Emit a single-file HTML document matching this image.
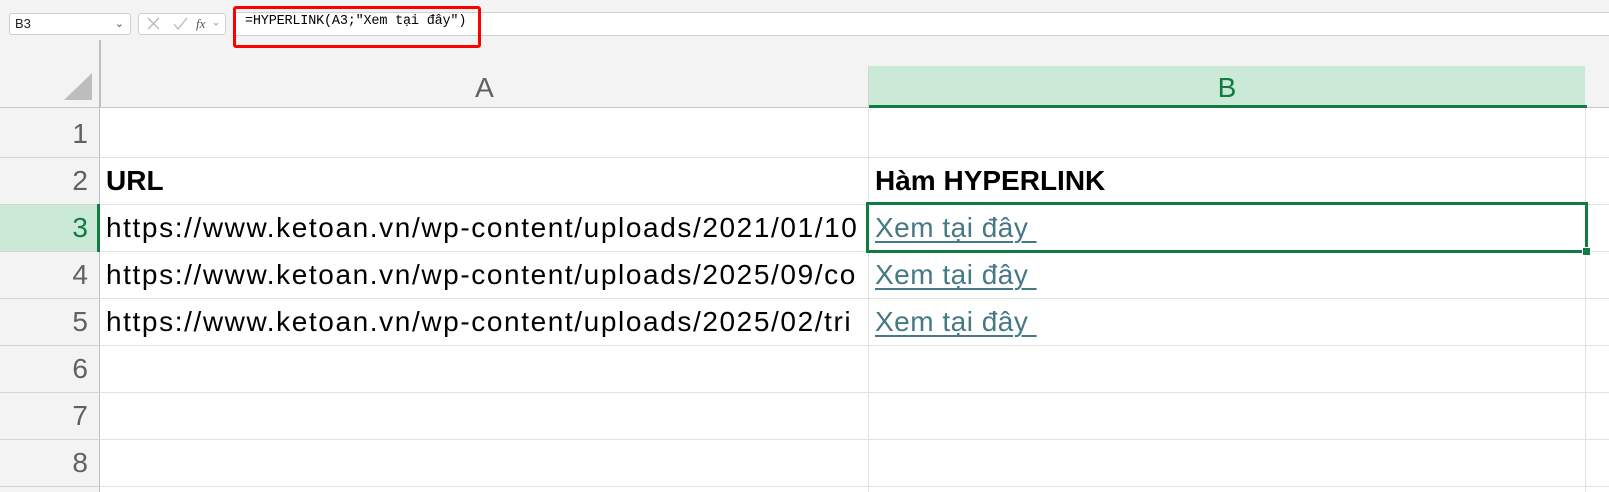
<!DOCTYPE html>
<html><head><meta charset="utf-8"><style>
*{margin:0;padding:0;box-sizing:border-box}
body{width:1609px;height:492px;overflow:hidden;background:#f3f3f3;position:relative;font-family:"Liberation Sans","Noto Sans CJK SC",sans-serif}
.a{position:absolute}
.grid{left:100px;top:108px;width:1509px;height:384px;background:#fff}
.hl{height:1px;background:#e1e1e1;left:100px;width:1509px}
.rh{left:0;width:88px;text-align:right;font-size:28px;color:#616161;height:47px;line-height:47px}
.rl{left:0;width:100px;height:1px;background:#d4d4d4}
.cell{font-size:28px;line-height:47px;height:47px;white-space:nowrap;overflow:hidden}
.url{letter-spacing:1.6px;font-family:"Liberation Sans",sans-serif}
.lnk{color:#467886;text-decoration:underline;text-decoration-thickness:2px;text-underline-offset:4px;letter-spacing:0.5px}
</style></head><body>
<div class="a" style="left:9px;top:13px;width:122px;height:22px;background:#fff;border:1px solid #d0d0d0;border-radius:3px;font-size:13px;line-height:20px;padding-left:5px;color:#222">B3<span class="a" style="right:6px;top:0;color:#555;font-size:11px">&#8964;</span></div>
<div class="a" style="left:138px;top:13px;width:88px;height:22px;background:#fff;border:1px solid #d0d0d0;border-radius:3px"></div>
<svg class="a" style="left:140px;top:13px" width="86" height="22"><path d="M8 5l11 11M19 5L8 16" stroke="#b8b8b8" stroke-width="1.3" fill="none"/><path d="M34 11l4 5 9-11" stroke="#b8b8b8" stroke-width="1.3" fill="none"/><text x="56" y="15" font-size="13" font-style="italic" fill="#555" font-family="Liberation Serif">fx</text><path d="M74 10l2 2 2-2" stroke="#aaa" fill="none"/></svg>
<div class="a" style="left:234px;top:12px;width:1375px;height:24px;background:#fff;border-top:1px solid #d0d0d0;border-bottom:1px solid #d0d0d0"></div>
<div class="a" style="left:233px;top:6px;width:248px;height:42px;border:3px solid #ff0000;border-radius:3px"></div>
<div class="a" style="left:245px;top:14px;font-family:'Liberation Mono',monospace;font-size:13.5px;letter-spacing:-0.2px;color:#000">=HYPERLINK(A3;"Xem tại đây")</div>
<div class="a" style="left:0;top:107px;width:1609px;height:1px;background:#c8c8c8"></div>
<div class="a" style="left:99px;top:40px;width:2px;height:452px;background:#c0c0c0"></div>
<svg class="a" style="left:60px;top:70px" width="36" height="34"><path d="M4 30H32V3Z" fill="#bdbdbd"/></svg>
<div class="a" style="left:100px;top:66px;width:769px;height:42px;text-align:center;font-size:28px;line-height:44px;color:#616161">A</div>
<div class="a" style="left:868px;top:66px;width:1px;height:42px;background:#d4d4d4"></div>
<div class="a" style="left:869px;top:66px;width:716px;height:42px;background:#cae9d6;text-align:center;font-size:28px;line-height:44px;color:#107c41">B</div>
<div class="a" style="left:869px;top:105px;width:718px;height:3px;background:#107c41"></div>
<div class="a grid"></div>
<div class="a hl" style="top:157px"></div><div class="a hl" style="top:204px"></div><div class="a hl" style="top:251px"></div><div class="a hl" style="top:298px"></div><div class="a hl" style="top:345px"></div><div class="a hl" style="top:392px"></div><div class="a hl" style="top:439px"></div><div class="a hl" style="top:486px"></div>
<div class="a" style="left:868px;top:108px;width:1px;height:384px;background:#e1e1e1"></div>
<div class="a" style="left:1585px;top:108px;width:1px;height:384px;background:#e1e1e1"></div>
<div class="a rl" style="top:157px"></div><div class="a rl" style="top:204px"></div><div class="a rl" style="top:251px"></div><div class="a rl" style="top:298px"></div><div class="a rl" style="top:345px"></div><div class="a rl" style="top:392px"></div><div class="a rl" style="top:439px"></div><div class="a rl" style="top:486px"></div>
<div class="a" style="left:0;top:205px;width:99px;height:46px;background:#cae9d6"></div>
<div class="a" style="left:97px;top:204px;width:3px;height:48px;background:#107c41"></div>
<div class="a rh" style="top:110px">1</div><div class="a rh" style="top:157px">2</div><div class="a rh" style="top:204px;color:#107c41">3</div><div class="a rh" style="top:251px">4</div><div class="a rh" style="top:298px">5</div><div class="a rh" style="top:345px">6</div><div class="a rh" style="top:392px">7</div><div class="a rh" style="top:439px">8</div>
<div class="a cell" style="left:106px;top:157px;font-weight:bold">URL</div>
<div class="a cell url" style="left:106px;top:204px;width:762px">https://www.ketoan.vn/wp-content/uploads/2021/01/10</div>
<div class="a cell url" style="left:106px;top:251px;width:762px">https://www.ketoan.vn/wp-content/uploads/2025/09/co</div>
<div class="a cell url" style="left:106px;top:298px;width:762px">https://www.ketoan.vn/wp-content/uploads/2025/02/tri</div>
<div class="a cell" style="left:875px;top:157px;font-weight:bold">Hàm HYPERLINK</div>
<div class="a cell lnk" style="left:875px;top:204px">Xem tại đây&nbsp;</div>
<div class="a cell lnk" style="left:875px;top:251px">Xem tại đây&nbsp;</div>
<div class="a cell lnk" style="left:875px;top:298px">Xem tại đây&nbsp;</div>
<div class="a" style="left:866px;top:202px;width:722px;height:51px;border:3px solid #107c41"></div>
<div class="a" style="left:1582px;top:247px;width:9px;height:9px;background:#107c41;border:1px solid #fff"></div>
</body></html>
